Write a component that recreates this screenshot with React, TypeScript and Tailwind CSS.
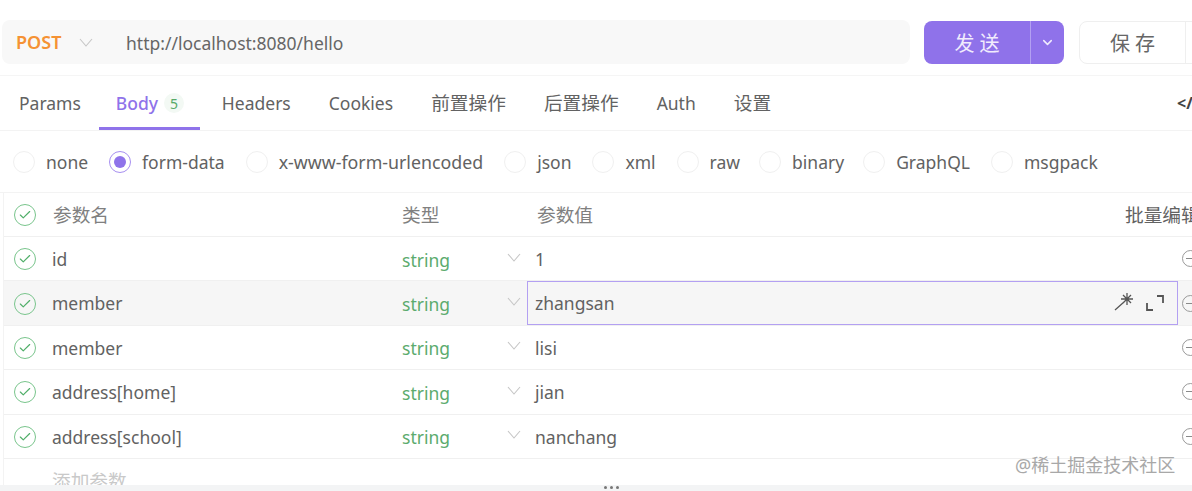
import { ChevronDown, Check } from 'lucide-react';

const font = "font-['Noto_Sans','Noto_Sans_CJK_SC',sans-serif]";

const tabs = ['Params', 'Body', 'Headers', 'Cookies', '前置操作', '后置操作', 'Auth', '设置'];
const bodyTypes = ['none', 'form-data', 'x-www-form-urlencoded', 'json', 'xml', 'raw', 'binary', 'GraphQL', 'msgpack'];
const rows = [
  { name: 'id', value: '1' },
  { name: 'member', value: 'zhangsan', active: true },
  { name: 'member', value: 'lisi' },
  { name: 'address[home]', value: 'jian' },
  { name: 'address[school]', value: 'nanchang' },
];

function Caret({ className }: { className?: string }) {
  return (
    <svg width="14" height="9" viewBox="0 0 14 9" fill="none" stroke="#c6c6c6" strokeWidth="1.1" className={`shrink-0 ${className ?? ''}`}>
      <path d="M1 1l6 7 6-7" />
    </svg>
  );
}

function CheckCircle() {
  return (
    <span className="flex h-[22px] w-[22px] shrink-0 items-center justify-center rounded-full border-[1.5px] border-[#79c58c]">
      <Check size={14} strokeWidth={2} className="text-[#4fae68]" />
    </span>
  );
}

function MinusCircle() {
  return (
    <span className="flex h-[17px] w-[17px] shrink-0 items-center justify-center rounded-full border border-[#9a9a9a]">
      <span className="h-px w-[9px] bg-[#8a8a8a]" />
    </span>
  );
}

function Radio({ on }: { on: boolean }) {
  return on ? (
    <span className="flex h-[22px] w-[22px] items-center justify-center rounded-full border border-[#a78ff0]">
      <span className="h-[12px] w-[12px] rounded-full bg-[#8f73ea]" />
    </span>
  ) : (
    <span className="h-[22px] w-[22px] rounded-full border border-[#f0f0f0]" />
  );
}

export default function App() {
  return (
    <div className={`${font} h-[491px] w-[1192px] overflow-hidden bg-white text-[17.5px] text-[#626262]`}>
      <div className="flex h-[76px] items-start gap-[14px] border-b border-[#f5f5f5] pl-[2px] pt-[20px]">
        <div className="flex h-[44px] w-[908px] shrink-0 items-center rounded-[8px] bg-[#f8f8f8] pl-[14px]">
          <span className="w-[50px] pt-px text-[18px] font-semibold text-[#f59234]">POST</span>
          <Caret className="ml-[13px]" />
          <span className="ml-[33px] pt-[2px] text-[#666666]">http://localhost:8080/hello</span>
        </div>
        <div className="mt-px flex h-[43px] w-[140px] shrink-0 rounded-[8px] bg-[#8f72ea] text-[#f1ecfd]">
          <span className="flex w-[107px] items-center justify-center border-r border-[#b3a0f2] pl-[5px] pt-[3px] text-[20px] tracking-[5px]">发送</span>
          <span className="flex flex-1 items-center justify-center">
            <ChevronDown size={15} strokeWidth={2.4} />
          </span>
        </div>
        <div className="ml-px mt-px flex h-[43px] w-[160px] shrink-0 rounded-[8px] border border-[#efefef]">
          <span className="flex w-[106px] items-center justify-center border-r border-[#efefef] pl-[5px] pt-[3px] text-[20px] tracking-[5px] text-[#666666]">保存</span>
        </div>
      </div>

      <div className="flex h-[55px] items-center justify-between border-b border-[#f3f3f3]">
        <div className="flex h-full">
          {tabs.map((t) =>
            t === 'Body' ? (
              <div key={t} className="ml-[-1px] mr-[3px] flex w-[101px] items-center gap-[6px] border-b-[3px] border-[#8f73ea] pl-[17px] pt-[3px] font-medium text-[#8f73ea]">
                {t}
                <span className="flex h-[20px] w-[20px] items-center justify-center rounded-full bg-[#f3f9f4] text-[14px] font-normal text-[#58a968]">5</span>
              </div>
            ) : (
              <div key={t} className={`flex items-center px-[19px] pt-px whitespace-nowrap ${/^[A-Za-z]/.test(t) ? '' : 'text-[18.7px]'}`}>{t}</div>
            ),
          )}
        </div>
        <span className="mr-[-10px] shrink-0 text-[16px] font-bold text-[#444444]">&lt;/&gt;</span>
      </div>

      <div className="flex h-[62px] items-center gap-[21px] border-b border-[#f3f3f3] pl-[13px]">
        {bodyTypes.map((b) => (
          <label key={b} className={`flex items-center gap-[11px] ${b === 'raw' || b === 'binary' ? 'mr-[-2px]' : ''}`}>
            <Radio on={b === 'form-data'} />
            <span className={`pt-px ${b === 'x-www-form-urlencoded' ? 'text-[17.8px]' : ''}`}>{b}</span>
          </label>
        ))}
      </div>

      <div className="ml-[3px] border-l border-[#f3f3f3]">
        <div className="flex h-[44px] items-center border-b border-[#f0f0f0] pt-[2px] text-[18.7px]">
          <div className="flex w-[398px] shrink-0 items-center gap-[17px] pl-[10px]">
            <CheckCircle />
            <span className="text-[#808080]">参数名</span>
          </div>
          <span className="w-[135px] shrink-0 text-[#808080]">类型</span>
          <span className="w-[588px] shrink-0 text-[#808080]">参数值</span>
          <span className="shrink-0 whitespace-nowrap">批量编辑</span>
        </div>
        {rows.map((r) => (
          <div key={r.value} className={`flex h-[44.4px] items-center border-b border-[#f0f0f0] ${r.active ? 'bg-[#f6f6f6]' : ''}`}>
            <div className="flex w-[398px] shrink-0 items-center gap-[16px] pl-[10px] pt-px">
              <CheckCircle />
              <span>{r.name}</span>
            </div>
            <span className="w-[105px] shrink-0 pt-[2px] text-[#5cab6e]">string</span>
            <Caret className="mb-[3px] mr-[6px]" />
            <div className={`flex h-full w-[651px] shrink-0 items-center justify-between pr-[12px] ${r.active ? 'border border-[#b3a0f2] pl-[7px]' : 'pl-[8px]'}`}>
              <span className="pt-px">{r.value}</span>
              {r.active && (
                <span className="flex items-center gap-[11px] text-[#555555]">
                  <svg width="20" height="20" viewBox="0 0 20 20" fill="none" stroke="currentColor" strokeWidth="1.3">
                    <path d="M1 17l9-8M13 0v12M7 6h12M9 2l8 8M17 2l-8 8" />
                  </svg>
                  <svg width="20" height="20" viewBox="0 0 20 20" fill="none" stroke="currentColor" strokeWidth="1.8">
                    <path d="M2 10v7h6M12 3h6v7" />
                  </svg>
                </span>
              )}
            </div>
            <span className="ml-[4px]">
              <MinusCircle />
            </span>
          </div>
        ))}
        <div className="h-[26px] overflow-hidden pl-[48px] pt-[8px] text-[18.7px] text-[#c9c9c9]">添加参数</div>
      </div>

      <div className="flex h-[6px] items-center justify-center gap-[3px] bg-[#f3f4f5] pl-[30px]">
        <span className="h-[3px] w-[3px] rounded-full bg-[#777777]" />
        <span className="h-[3px] w-[3px] rounded-full bg-[#777777]" />
        <span className="h-[3px] w-[3px] rounded-full bg-[#777777]" />
      </div>

      <span className="absolute left-[1015px] top-[452px] text-[18px] text-[#a8a8a8]">@稀土掘金技术社区</span>
    </div>
  );
}
